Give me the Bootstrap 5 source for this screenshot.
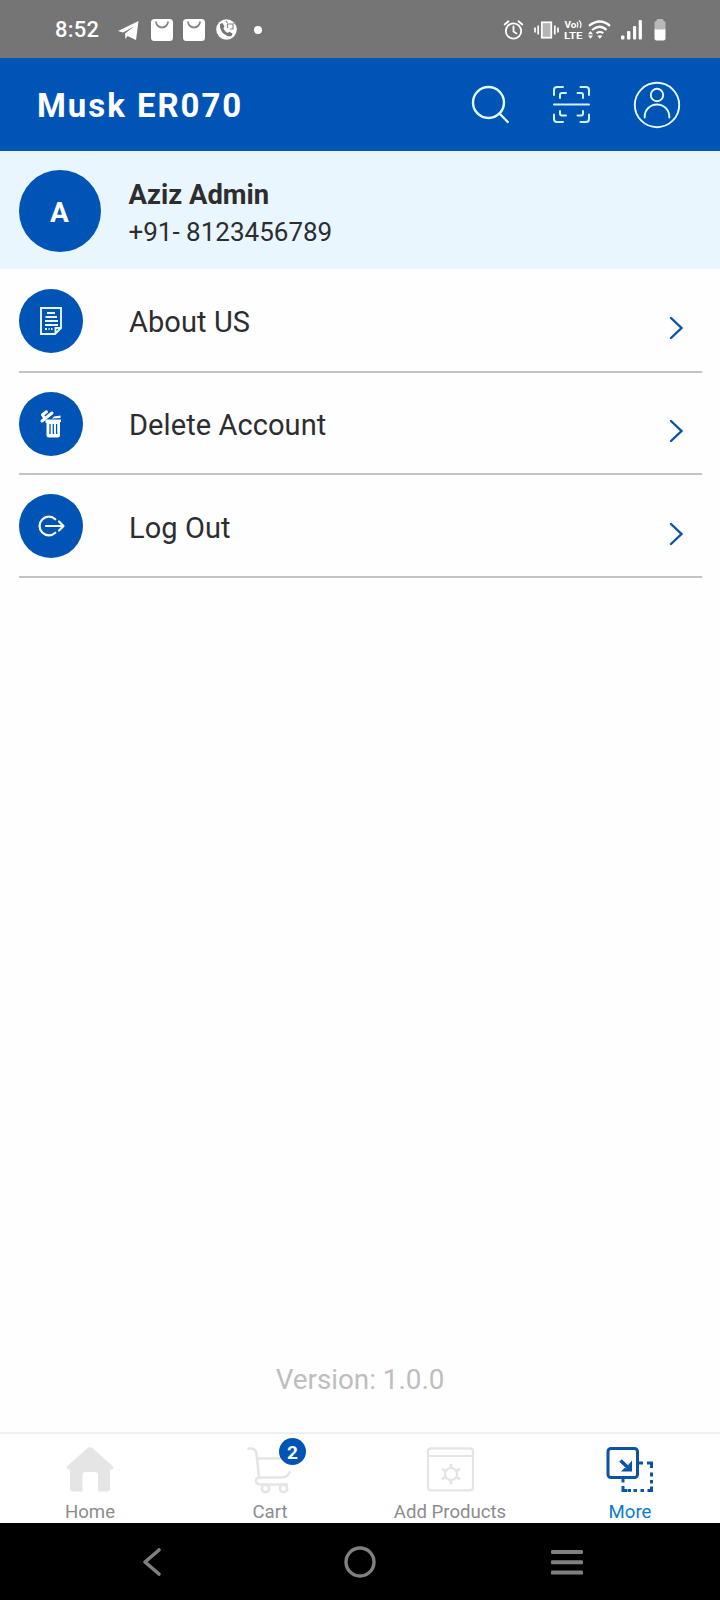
<!DOCTYPE html>
<html lang="en">
<head>
<meta charset="utf-8">
<meta name="viewport" content="width=device-width, initial-scale=1">
<title>Musk ER070</title>
<link href="https://cdn.jsdelivr.net/npm/bootstrap@5.3.0/dist/css/bootstrap.min.css" rel="stylesheet">
<style>
  :root { --brand: #0054b6; }
  body { font-family: Roboto, "Liberation Sans", sans-serif; color: #2d2d30; }
  svg { display: block; flex: none; overflow: visible; }
  .screen { height: 1600px; width: 720px; overflow: hidden; background: #fefefe; }
  .status { height: 58px; background: #757575; padding: 1px 54px 0 55px; font-size: 22px; }
  .clock { width: 62px; letter-spacing: .2px; font-weight: 500; line-height: 26px; padding-top: 1px; }
  .gap-bag { margin-left: 12px; }
  .gap-bag2 { margin-left: 10px; }
  .gap-call { margin-left: 11px; }
  .gap-dot { margin-left: 17px; }
  .gap-sm { margin-left: 5px; }
  .topbar { height: 93px; background: var(--brand); padding: 0 40px 0 37px; }
  .title { font-size: 33px; font-weight: 700; letter-spacing: 1.95px; line-height: 1; padding-top: 2px; }
  .gap-tool { margin-left: 43px; }
  .profile { height: 118px; background: #e9f6fe; padding: 1px 0 0 18.5px; }
  .avatar { width: 82px; height: 82px; background: var(--brand); font-size: 28px; font-weight: 700; margin-right: 28px; padding-top: 4px; }
  .who { font-size: 27.4px; font-weight: 700; line-height: 37px; padding-top: 5px; }
  .phone { font-size: 26px; line-height: 36px; }
  .menu-row { height: 102.5px; margin: 0 18px 0 19px; border-bottom: 2px solid #c3c3c5; padding: 2px 19.5px 0 0; font-size: 29px; letter-spacing: .08px; }
  .menu-row:first-child { height: 103.5px; }
  .menu-row > span { padding-top: 4px; }
  .disc { width: 64px; height: 64px; background: var(--brand); margin-right: 46px; }
  .chev { margin-top: 15px; }
  .version { font-size: 27.8px; line-height: 34px; color: #bebebe; padding-bottom: 35px; }
  .tabs { height: 91px; border-top: 2px solid #f0f0f0; background: #fff; }
  .tab-item { width: 180px; padding-top: 13px; font-size: 18.6px; line-height: 22px; color: #8c8c8e; }
  .tab-item svg { margin-bottom: 8px; }
  .tab-item.current { color: #0a7ccb; }
  .count { position: absolute; left: 99px; top: 4px; width: 27px; height: 27px; background: var(--brand); font-size: 19px; font-weight: 700; line-height: 1; padding-top: 2px; }
  .sysnav { height: 77px; background: #000; padding: 0 137px 0 143px; }
  .sysnav .home-ring { margin-left: 8px; }
</style>
</head>
<body>
<div class="screen d-flex flex-column">

  <div class="status d-flex align-items-center text-white">
    <span class="clock">8:52</span>
    <svg width="22" height="22" viewBox="0 0 22 22" fill="#fff"><path d="M1 12 21.500 2 19 21 10.500 17 8.500 20 8 14.500 17 7.500 6 13.500Z"/></svg>
    <svg class="gap-bag" width="22" height="22" viewBox="0 0 22 22"><rect width="22" height="22" rx="3.500" fill="#fff"/><path d="M5 2.500a6 6 0 0 0 12 0" fill="none" stroke="#858585" stroke-width="1.800"/></svg>
    <svg class="gap-bag2" width="22" height="22" viewBox="0 0 22 22"><rect width="22" height="22" rx="3.500" fill="#fff"/><path d="M5 2.500a6 6 0 0 0 12 0" fill="none" stroke="#858585" stroke-width="1.800"/></svg>
    <svg class="gap-call" width="21" height="21" viewBox="0 0 21 21"><circle cx="10.500" cy="10.500" r="10.300" fill="#fff"/><path d="M4 5 6.500 4 8.500 7.500 7.300 9.200Q8.500 12.500 11.500 14L13.300 12.800 16.500 14.500 15.500 17Q11.500 18 7.500 14.500T4 5Z" fill="#757575"/><path d="M11.500 9V5H17V10H14M10 2 11.500 4M17.500 4.500 19 3" fill="none" stroke="#8a8a8a" stroke-width="1.200"/></svg>
    <svg class="gap-dot" width="8" height="8"><circle cx="4" cy="4" r="4" fill="#fff"/></svg>

    <svg class="ms-auto" width="20" height="20" viewBox="0 0 20 20" fill="none" stroke="#fff" stroke-width="1.800" stroke-linecap="round"><circle cx="9.500" cy="11" r="7.700"/><path d="M9.500 6.500V11.500L12.500 13.500M.7 4.500 4.500 1.300M18.300 4.500 14.500 1.300"/></svg>
    <svg class="gap-bag2" width="25" height="18" viewBox="0 0 25 18"><rect x="7.800" y="1.300" width="9.500" height="15.400" fill="#b5b5b5" stroke="#fff" stroke-width="1.700"/><path d="M1 6.500v5M4.200 4.500v9M20.800 4.500v9M24 6.500v5" stroke="#fff" stroke-width="1.700"/></svg>
    <svg class="gap-sm" width="19" height="20" viewBox="0 0 19 20" fill="#fff" font-family="Roboto, sans-serif" font-weight="700"><text x="0.500" y="7.600" font-size="9" textLength="12" lengthAdjust="spacingAndGlyphs">Vo</text><path d="M13 2Q14.800 4.500 13 7.500M15 .5Q18.500 4 16 8" fill="none" stroke="#fff" stroke-width="1.200"/><text x="0" y="18.800" font-size="9.500" textLength="18.500" lengthAdjust="spacingAndGlyphs">LTE</text></svg>
    <svg class="gap-sm ms-1" width="23" height="20" viewBox="0 0 23 20" fill="none" stroke="#fff" stroke-width="2.200"><path d="M2 5.800Q13 -2.800 23 5.800M5 10Q13 3.500 19.500 10M9.500 13.200Q13 10.800 16.300 13.200"/><path d="M10.500 16 12.800 18.800 15.300 16Q12.900 14.500 10.500 16ZM1 14.200 3.500 11 6 14.200ZM1 15.600 3.500 18.800 6 15.600Z" fill="#fff" stroke="none"/></svg>
    <svg class="gap-call" width="21" height="20" viewBox="0 0 21 20" fill="#fff"><rect y="15.500" width="3.400" height="4" rx="1"/><rect x="6" y="11" width="3.400" height="8.500" rx="1"/><rect x="12" y="6" width="3.200" height="13.500" rx="1"/><rect x="17.700" y="0" width="3.200" height="19.500" rx="1"/></svg>
    <svg class="gap-bag" width="12" height="23" viewBox="0 0 12 23"><path d="M.5 4Q2.800 2.800 3.300 1H8.700Q9.200 2.800 11.500 4V12H.5Z" fill="#b8b8b8"/><path d="M.5 11.500h11V20.500a2 2 0 0 1-2 2h-7a2 2 0 0 1-2-2Z" fill="#fff"/></svg>
  </div>

  <header class="topbar d-flex align-items-center text-white">
    <div class="title me-auto">Musk ER070</div>
    <svg width="38" height="38" viewBox="0 0 38 38" fill="none" stroke="#e4fbff" stroke-width="2.400" stroke-linecap="round"><circle cx="16.500" cy="16.500" r="15.500"/><path d="M27.500 27.500 35.800 36"/></svg>
    <svg class="gap-tool" width="38" height="38" viewBox="0 0 38 38" fill="none" stroke="#d3f4ff" stroke-width="2" stroke-linecap="round" stroke-linejoin="round"><path d="M1 18.500H36M1 9V4a3 3 0 0 1 3-3H10M7 12V9a2 2 0 0 1 2-2H13M27.500 1h5.500a3 3 0 0 1 3 3V9M24.500 7h3.500a2 2 0 0 1 2 2V12M1 28.500v4.500a3 3 0 0 0 3 3H10M7 25V27.500a2 2 0 0 0 2 2H13M27.500 36h5.500a3 3 0 0 0 3-3V28.500M24.500 29.500h3.500a2 2 0 0 0 2-2V25"/></svg>
    <svg class="gap-tool" width="46" height="46" viewBox="0 0 46 46" fill="none" stroke="#e4fbff" stroke-width="1.900" stroke-linecap="round"><circle cx="23" cy="23" r="22.200"/><circle cx="23" cy="13" r="6.200"/><path d="M10.700 35.500V34.500a12.300 12 0 0 1 24.600 0V35.500"/></svg>
  </header>

  <section class="profile d-flex align-items-center">
    <div class="avatar rounded-circle d-flex align-items-center justify-content-center text-white">A</div>
    <div>
      <div class="who">Aziz Admin</div>
      <div class="phone">+91- 8123456789</div>
    </div>
  </section>

  <main>
    <div class="menu-row d-flex align-items-center">
      <div class="disc rounded-circle d-flex align-items-center justify-content-center">
        <svg width="22" height="28" viewBox="0 0 22 28" fill="none" stroke="#e6f8ff" stroke-width="1.900"><path d="M1 1H21V21L15 27H1ZM15.500 27V21H21"/><path d="M7 6H15M5.500 10H17M5 14H18M5 18H18M5 22H7M8.500 22H9.700M11 22H12.500"/></svg>
      </div>
      <span class="me-auto">About US</span>
      <svg class="chev" width="14" height="24" viewBox="0 0 14 24" fill="none" stroke="#0b53a2" stroke-width="2.400" stroke-linecap="round"><path d="M2 2 12.500 12 2 22"/></svg>
    </div>
    <div class="menu-row d-flex align-items-center">
      <div class="disc rounded-circle d-flex align-items-center justify-content-center">
        <svg width="22" height="28" viewBox="0 0 22 28"><path d="M5.500 9.500H21V12H20V25a2.500 2.500 0 0 1-2.500 2.500H9A2.500 2.500 0 0 1 6.500 25V13H5.500Z" fill="#fff"/><path d="M10 14V24M13.300 14V24M16.600 14V24" stroke="#0054b6" stroke-width="1.300"/><path d="M2 11 12 3M3.500 6.500 2.500 4.800 6.500 1.800" fill="none" stroke="#fff" stroke-width="3" stroke-linecap="round" stroke-linejoin="round"/><path d="M12 8.500 14 6.500 20.500 5.500V8Z" fill="#fff"/></svg>
      </div>
      <span class="me-auto">Delete Account</span>
      <svg class="chev" width="14" height="24" viewBox="0 0 14 24" fill="none" stroke="#0b53a2" stroke-width="2.400" stroke-linecap="round"><path d="M2 2 12.500 12 2 22"/></svg>
    </div>
    <div class="menu-row d-flex align-items-center">
      <div class="disc rounded-circle d-flex align-items-center justify-content-center">
        <svg width="28" height="22" viewBox="0 0 28 22" fill="none" stroke="#fff" stroke-width="2.200" stroke-linecap="round" stroke-linejoin="round"><path d="M18.300 4.300A9.300 9.300 0 1 0 18.300 17.700M9 11H26.500M22 6.500 26.500 11 22 15.500"/></svg>
      </div>
      <span class="me-auto">Log Out</span>
      <svg class="chev" width="14" height="24" viewBox="0 0 14 24" fill="none" stroke="#0b53a2" stroke-width="2.400" stroke-linecap="round"><path d="M2 2 12.500 12 2 22"/></svg>
    </div>
  </main>

  <div class="version mt-auto text-center">Version: 1.0.0</div>

  <nav class="tabs d-flex">
    <div class="tab-item d-flex flex-column align-items-center">
      <svg width="48" height="46" viewBox="0 0 48 46" fill="#e5e5e5"><path d="M21 1.500Q24 -.8 27 1.500L46.500 19Q48.500 22 45.500 22.500H44V41a3.500 3.500 0 0 1-3.500 3.500H32V28a3 3 0 0 0-3-3H19.500a3 3 0 0 0-3 3V44.500H7.500A3.500 3.500 0 0 1 4 41V22.500H2.500Q-.5 22 1.500 19Z"/></svg>
      <span>Home</span>
    </div>
    <div class="tab-item position-relative d-flex flex-column align-items-center">
      <svg width="46" height="46" viewBox="0 0 46 46" fill="none" stroke="#e5e5e5" stroke-width="2.600" stroke-linecap="round" stroke-linejoin="round"><path d="M1.500 1.500H4.500Q8.500 2 9.500 6.500L12 30M10.500 11.500H42M12 30.500H35Q40.500 30 42.500 25.500M12 30.500Q9 31 9 34T13 37.500H40"/><circle cx="18.500" cy="41.500" r="3.700" fill="#fff"/><circle cx="36.500" cy="41.500" r="3.700" fill="#fff"/></svg>
      <span class="count rounded-circle text-white d-flex align-items-center justify-content-center">2</span>
      <span>Cart</span>
    </div>
    <div class="tab-item d-flex flex-column align-items-center">
      <svg width="47" height="46" viewBox="0 0 47 46" fill="none" stroke="#e5e5e5" stroke-width="2.200"><rect x="1" y="1.300" width="45" height="42" rx="3"/><path d="M1 9H46"/><circle cx="24" cy="27" r="6"/><path stroke-width="2.600" d="M24 16.800V21M24 33V37.500M15 21.800 18.700 24M33 21.800 29.300 24M15 32.200 18.700 30M33 32.200 29.300 30"/></svg>
      <span>Add Products</span>
    </div>
    <div class="tab-item current d-flex flex-column align-items-center">
      <svg width="48" height="46" viewBox="0 0 48 46" fill="none" stroke="#0c52a5" stroke-width="3"><rect x="2" y="1.500" width="29.500" height="29" rx="3"/><path d="M14.500 13.500 23.500 22" stroke-width="3.500"/><path d="M26 13.500V24.500H15L18.500 21 21.500 21.500 22.500 17.500Z" fill="#0c52a5" stroke="none"/><path d="M33 16H37M41 16H45.500V21M45.500 25.500V29.500M45.500 33V36.500M45.500 39.500V43.500H41.500M38 43.500H34.500M31 43.500H27.500M25 43.500H22M21.500 43.500H17V39M17 31.500V35.500"/></svg>
      <span>More</span>
    </div>
  </nav>

  <div class="sysnav d-flex align-items-center justify-content-between">
    <svg width="18" height="28" viewBox="0 0 18 28" fill="none" stroke="#808080" stroke-width="3.600" stroke-linecap="round" stroke-linejoin="round"><path d="M16 2 2 14 16 26"/></svg>
    <svg class="home-ring" width="32" height="32" viewBox="0 0 32 32" fill="none" stroke="#808080" stroke-width="3.400"><circle cx="16" cy="16" r="14"/></svg>
    <svg width="32" height="26" viewBox="0 0 32 26" fill="#808080"><rect y="1" width="32" height="4" rx="1.200"/><rect y="11.300" width="32" height="4" rx="1.200"/><rect y="21.600" width="32" height="4" rx="1.200"/></svg>
  </div>
</div>
<script src="https://cdn.jsdelivr.net/npm/bootstrap@5.3.0/dist/js/bootstrap.bundle.min.js"></script>
</body>
</html>
